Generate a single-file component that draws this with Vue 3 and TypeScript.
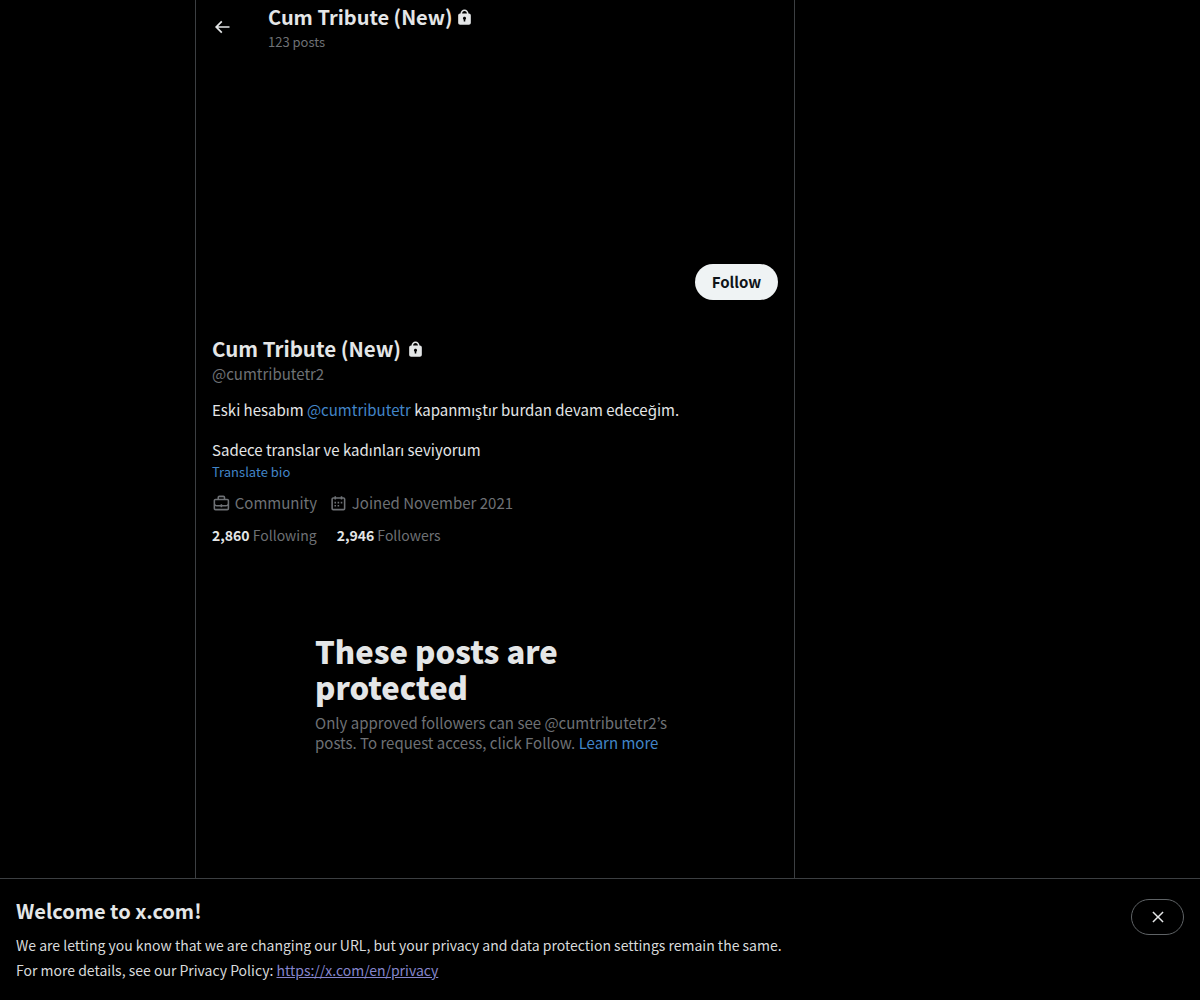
<script setup lang="ts">
const lockPath = 'M17.5 7H17v-.25c0-2.76-2.24-5-5-5s-5 2.24-5 5V7h-.5C5.12 7 4 8.12 4 9.5v9C4 19.88 5.12 21 6.5 21h11c1.39 0 2.5-1.12 2.5-2.5v-9C20 8.12 18.89 7 17.5 7zM13 14.73V17h-2v-2.27c-.59-.34-1-.99-1-1.73 0-1.1.9-2 2-2 1.11 0 2 .9 2 2 0 .74-.4 1.39-1 1.73zM15 7H9v-.25c0-1.66 1.35-3 3-3 1.66 0 3 1.34 3 3V7z'
</script>

<template>
  <div class="page">
    <div class="stage">
      <main class="column">
        <header class="topbar">
          <svg class="back" viewBox="0 0 24 24" aria-hidden="true"><path d="M7.414 13l5.043 5.04-1.414 1.42L3.586 12l7.457-7.46 1.414 1.42L7.414 11H21v2H7.414z" /></svg>
          <div class="top-text">
            <div class="top-title">Cum Tribute (New) <svg class="lock-sm" viewBox="0 0 24 24" aria-hidden="true"><path :d="lockPath" /></svg></div>
            <div class="top-posts">123 posts</div>
          </div>
        </header>

        <div class="actions"><button class="follow">Follow</button></div>

        <section class="profile">
          <h1 class="name">Cum Tribute (New) <svg class="lock-lg" viewBox="0 0 24 24" aria-hidden="true"><path :d="lockPath" /></svg></h1>
          <div class="handle">@cumtributetr2</div>
          <p class="bio">Eski hesabım <a class="link">@cumtributetr</a> kapanmıştır burdan devam edeceğim.</p>
          <p class="bio second">Sadece translar ve kadınları seviyorum</p>
          <a class="translate">Translate bio</a>
          <div class="meta">
            <span class="meta-item">
              <svg class="meta-icon" viewBox="0 0 24 24" aria-hidden="true"><path d="M19.5 6H17V4.5C17 3.12 15.88 2 14.5 2h-5C8.12 2 7 3.12 7 4.5V6H4.5C3.12 6 2 7.12 2 8.5v10C2 19.88 3.12 21 4.5 21h15c1.38 0 2.5-1.12 2.5-2.5v-10C22 7.12 20.88 6 19.5 6zM9 4.5c0-.28.23-.5.5-.5h5c.28 0 .5.22.5.5V6H9V4.5zm11 14c0 .28-.22.5-.5.5h-15c-.27 0-.5-.22-.5-.5v-3.04c.59.35 1.27.54 2 .54h5v1h2v-1h5c.73 0 1.41-.19 2-.54v3.04zm0-6.49c0 1.1-.9 1.99-2 1.99h-5v-1h-2v1H6c-1.1 0-2-.9-2-2V8.5c0-.28.23-.5.5-.5h15c.28 0 .5.22.5.5v3.51z" /></svg>
              Community
            </span>
            <span class="meta-item">
              <svg class="meta-icon" viewBox="0 0 24 24" aria-hidden="true"><path d="M7 4V3h2v1h6V3h2v1h1.5C19.89 4 21 5.12 21 6.5v12c0 1.38-1.11 2.5-2.5 2.5h-13C4.12 21 3 19.88 3 18.5v-12C3 5.12 4.12 4 5.5 4H7zm0 2H5.5c-.27 0-.5.22-.5.5v12c0 .28.23.5.5.5h13c.28 0 .5-.22.5-.5v-12c0-.28-.22-.5-.5-.5H17v1h-2V6H9v1H7V6zm0 6h2v-2H7v2zm0 4h2v-2H7v2zm4-4h2v-2h-2v2zm0 4h2v-2h-2v2zm4-4h2v-2h-2v2z" /></svg>
              Joined November 2021
            </span>
          </div>
          <div class="stats">
            <span><b>2,860</b> Following</span>
            <span><b>2,946</b> Followers</span>
          </div>
        </section>

        <section class="protected">
          <h2 class="protected-title">These posts are protected</h2>
          <p class="protected-text">Only approved followers can see @cumtributetr2’s posts. To request access, click Follow. <a class="link">Learn more</a></p>
        </section>
      </main>
    </div>

    <footer class="notice">
      <div class="notice-body">
        <h3 class="notice-title">Welcome to x.com!</h3>
        <p class="notice-line">We are letting you know that we are changing our URL, but your privacy and data protection settings remain the same.</p>
        <p class="notice-line">For more details, see our Privacy Policy: <a class="privacy">https://x.com/en/privacy</a></p>
      </div>
      <button class="close" aria-label="Close">
        <svg viewBox="0 0 24 24" aria-hidden="true"><path d="M10.59 12L4.54 5.96l1.42-1.42L12 10.59l6.04-6.05 1.42 1.42L13.41 12l6.05 6.04-1.42 1.42L12 13.41l-6.04 6.05-1.42-1.42L10.59 12z" /></svg>
      </button>
    </footer>
  </div>
</template>

<style>
html, body { margin: 0; background: #000; }
</style>

<style scoped>
.page {
  width: 1200px;
  height: 1000px;
  overflow: hidden;
  background: #000;
  display: flex;
  flex-direction: column;
  font-family: "Noto Sans CJK JP", "Noto Sans", sans-serif;
  color: #e4e6e7;
}
.stage { height: 878px; padding-left: 195px; }
.column {
  box-sizing: border-box;
  width: 600px;
  height: 878px;
  border-left: 1px solid #3c3f42;
  border-right: 1px solid #3c3f42;
}
.topbar { display: flex; height: 264px; padding-left: 16px; box-sizing: border-box; }
.back { width: 20px; height: 20px; fill: #e4e6e7; margin-top: 17px; margin-right: 36px; }
.top-title { font-size: 20px; font-weight: 700; line-height: 24px; margin-top: 5px; display: flex; align-items: center; gap: 3px; }
.lock-sm { width: 19px; height: 19px; fill: #e4e6e7; margin-top: 1px; }
.top-posts { font-size: 13px; line-height: 16px; color: #6e7175; margin-top: 5px; }
.actions { display: flex; justify-content: flex-end; padding-right: 16px; }
.follow {
  width: 83px;
  height: 36px;
  padding: 0;
  border: 0;
  border-radius: 18px;
  background: #eff3f4;
  color: #0f1419;
  font: 700 15px/20px "Noto Sans CJK JP", sans-serif;
}
.profile { padding: 36px 16px 0; }
.name { margin: 0; font-size: 20.5px; font-weight: 700; line-height: 24px; display: flex; align-items: center; gap: 5px; }
.lock-lg { width: 19px; height: 19px; fill: #e4e6e7; margin-top: 3px; }
.handle { font-size: 15px; line-height: 20px; color: #6e7175; margin-top: 4px; }
.bio { margin: 16px 0 0; font-size: 15px; line-height: 20px; color: #e4e6e7; }
.bio.second { margin-top: 20px; }
.link { color: #4285c8; }
.translate { display: block; font-size: 13px; line-height: 16px; color: #4285c8; margin-top: 4px; }
.meta { display: flex; gap: 12px; margin-top: 13px; font-size: 15px; line-height: 20px; color: #6e7175; }
.meta-item { display: flex; align-items: center; gap: 4px; }
.meta-icon { width: 18.75px; height: 18.75px; fill: #6e7175; }
.stats { display: flex; gap: 20px; margin-top: 12px; font-size: 14px; line-height: 20px; color: #6e7175; }
.stats b { color: #e4e6e7; font-weight: 700; }
.protected { width: 360px; margin: 88px 0 0 119px; }
.protected-title { margin: 0; font-size: 31px; line-height: 36px; font-weight: 900; color: #e4e6e7; }
.protected-text { margin: 8px 0 0; font-size: 15px; line-height: 20px; color: #6e7175; }
.notice {
  flex: 1;
  box-sizing: border-box;
  border-top: 1px solid #3c3f42;
  padding: 16px;
  display: flex;
  justify-content: space-between;
  align-items: flex-start;
}
.notice-title { margin: 0; font-size: 20px; line-height: 32px; font-weight: 700; color: #e4e6e7; }
.notice-line { margin: 0; font-size: 14px; line-height: 25px; color: #d8dadb; }
.notice-title + .notice-line { margin-top: 6px; }
.privacy { color: #8585cc; text-decoration: underline; }
.close {
  width: 53px;
  height: 36px;
  margin-top: 4px;
  padding: 0;
  background: transparent;
  border: 1px solid #5f6366;
  border-radius: 18px;
  display: flex;
  align-items: center;
  justify-content: center;
}
.close svg { width: 18px; height: 18px; fill: #e4e6e7; }
</style>
